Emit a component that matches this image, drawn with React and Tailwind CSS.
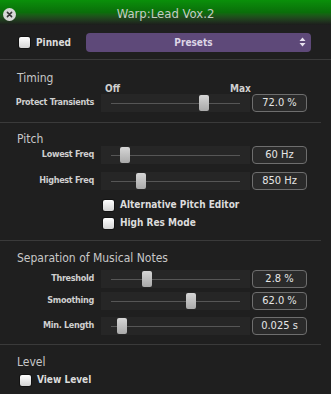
const SLIDER_MIN = 111
const SLIDER_SPAN = 129

function Checkbox() {
  return (
    <span className="w-[11px] h-[11px] rounded-[2px] bg-gradient-to-b from-[#ffffff] to-[#d4d4d4] flex-shrink-0 shadow-[0_0_0_1px_rgba(0,0,0,0.4)]" />
  )
}

function CheckRow({ label, className = '' }) {
  return (
    <div className={`flex items-center gap-[6px] h-[12px] ${className}`}>
      <Checkbox />
      <span className="text-[10px] font-bold text-[#dcdcdc] leading-none">{label}</span>
    </div>
  )
}

function Slider({ pos }) {
  // pos = thumb centre in px from the left edge of the slider box
  return (
    <div className="relative w-[149px] h-[18px] bg-[#262626] flex items-center px-[10px]">
      <div className="w-full h-px bg-[#565656]" />
      <div
        className="absolute top-px w-[10px] h-[16px] rounded-[2px] bg-gradient-to-b from-[#d6d6d6] to-[#a9a9a9]"
        style={{ left: pos - 5 }}
      />
    </div>
  )
}

function ValueBox({ value }) {
  return (
    <div className="ml-[2px] w-[55px] h-[18px] rounded-[4px] border border-[#6e6e6e] bg-[#2a2a2a] flex items-center justify-center text-[11px] text-[#e6e6e6]">
      {value}
    </div>
  )
}

function ParamRow({ label, pct, value, className = '' }) {
  const pos = SLIDER_MIN + pct * SLIDER_SPAN - 101
  return (
    <div className={`flex items-center h-[18px] ${className}`}>
      <div className="w-[95px] pr-px text-right text-[9px] tracking-[-0.3px] font-bold text-[#cfcfcf] whitespace-nowrap">{label}</div>
      <div className="w-[6px]" />
      <Slider pos={pos} />
      <ValueBox value={value} />
    </div>
  )
}

function Header({ children, className = '' }) {
  return <div className={`pl-[17px] h-[11px] text-[12px] text-[#c8c8c8] leading-none ${className}`}>{children}</div>
}

function Divider({ full, className = '' }) {
  return <div className={`h-px bg-[#3a3a3a] ${full ? 'w-full' : 'w-[321px]'} ${className}`} />
}

export default function App() {
  return (
    <div className="w-[331px] h-[394px] bg-[#1f1f1f] overflow-hidden" style={{ fontFamily: '"DejaVu Sans Condensed", "DejaVu Sans", sans-serif' }}>

      {/* ── Title bar ── */}
      <div className="relative h-[25px] flex items-center justify-center bg-gradient-to-b from-[#0a900a] via-[#0a6e0a] to-[#1c1c1c]">
        <div className="absolute left-[3px] top-[8px] w-[13px] h-[13px] rounded-full bg-[#d8d8d8] flex items-center justify-center">
          <svg className="w-[7px] h-[7px]" viewBox="0 0 10 10" stroke="#333" strokeWidth={2.2} strokeLinecap="round">
            <path d="M2 2l6 6M8 2l-6 6" />
          </svg>
        </div>
        <span className="text-[13px] text-[#c4ccc4] pt-[2px]">Warp:Lead Vox.2</span>
      </div>

      {/* ── Toolbar ── */}
      <div className="h-[34px] flex items-center">
        <div className="pl-[19px] flex items-center gap-[6px]">
          <Checkbox />
          <span className="text-[10px] font-bold text-[#dcdcdc]">Pinned</span>
        </div>
        <div className="ml-auto mr-[20px] w-[225px] h-[19px] rounded-[4px] bg-[#5e4979] relative flex items-center justify-center pr-[10px]">
          <span className="text-[10px] font-bold text-[#ddd6e6]">Presets</span>
          <svg className="absolute right-[5px] w-[7px] h-[10px]" viewBox="0 0 7 10" fill="#e8e2ee">
            <path d="M3.5 0.5L6.5 4H0.5z M3.5 9.5L6.5 6H0.5z" />
          </svg>
        </div>
      </div>
      <Divider full />

      {/* ── Timing ── */}
      <Header className="mt-[12px]">Timing</Header>
      <div className="flex h-[10px] text-[10px] font-bold text-[#cfcfcf] leading-none mt-[1px]">
        <span className="ml-[105px]">Off</span>
        <span className="ml-[110px]">Max</span>
      </div>
      <ParamRow label="Protect Transients" pct={0.72} value="72.0 %" />
      <Divider className="mt-[10px]" />

      {/* ── Pitch ── */}
      <Header className="mt-[10px]">Pitch</Header>
      <ParamRow label="Lowest Freq" pct={0.109} value="60 Hz" className="mt-[2px]" />
      <ParamRow label="Highest Freq" pct={0.233} value="850 Hz" className="mt-[8px]" />
      <CheckRow label="Alternative Pitch Editor" className="ml-[103px] mt-[9px]" />
      <CheckRow label="High Res Mode" className="ml-[103px] mt-[6px]" />
      <Divider className="mt-[11px]" />

      {/* ── Separation of Musical Notes ── */}
      <Header className="mt-[11px]">Separation of Musical Notes</Header>
      <ParamRow label="Threshold" pct={0.279} value="2.8 %" className="mt-[7px]" />
      <ParamRow label="Smoothing" pct={0.62} value="62.0 %" className="mt-[4px]" />
      <ParamRow label="Min. Length" pct={0.085} value="0.025 s" className="mt-[7px]" />
      <Divider className="mt-[9px]" />

      {/* ── Level ── */}
      <Header className="mt-[11px]">Level</Header>
      <CheckRow label="View Level" className="ml-[20px] mt-[7px]" />
    </div>
  )
}
